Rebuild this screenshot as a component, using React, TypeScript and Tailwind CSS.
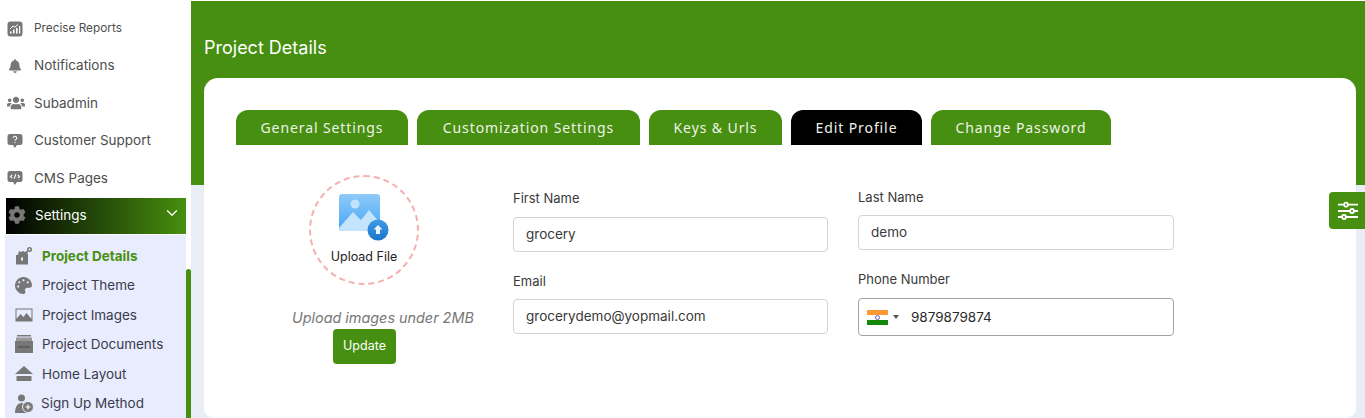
import React from "react";
import { FaBell, FaUsers, FaCog, FaPalette } from "react-icons/fa";
import { ChevronDown } from "lucide-react";

const gray = "#777777";

function ReportIcon() {
  return (
    <svg width="16" height="16" viewBox="0 0 16 16">
      <rect x="0.5" y="0.5" width="15" height="15" rx="3" fill={gray} />
      <path d="M3 12.500v-2h1.600v2zM6 12.500V8.500h1.600v4zM9 12.500V7h1.600v5.500zM12 12.500V5h1.200v7.500z" fill="#fff" />
      <path d="M3 8l3-3 2 1.200L11 3.500" stroke="#fff" strokeWidth="1" fill="none" />
    </svg>
  );
}
function BubbleIcon({ kind }: { kind: "q" | "code" }) {
  return (
    <svg width="16" height="16" viewBox="0 0 16 16">
      <path d="M3 1h10a2.500 2.500 0 0 1 2.500 2.500v6A2.500 2.500 0 0 1 13 12h-3l-2.200 3L6 12H3A2.500 2.500 0 0 1 .5 9.500v-6A2.500 2.500 0 0 1 3 1z" fill={gray} />
      {kind === "q" ? (
        <path d="M6.300 5a1.700 1.700 0 1 1 2.500 1.500c-.5.300-.8.600-.8 1.200M8 9v1" stroke="#fff" strokeWidth="1.100" fill="none" />
      ) : (
        <path d="M5.200 4.800L3.500 6.500l1.700 1.700M10.800 4.800l1.700 1.700-1.700 1.700M8.900 4.300L7.100 8.700" stroke="#fff" strokeWidth="1.100" fill="none" />
      )}
    </svg>
  );
}
function DetailsIcon() {
  return (
    <svg width="18" height="19" viewBox="0 0 18 19">
      <rect x="1" y="9" width="12" height="9.500" fill={gray} />
      <path d="M3 9l1-4 2 1 2-1 2 1 2-1 1 4z" fill={gray} />
      <rect x="6" y="11.500" width="2" height="3" fill="#e8ecfd" />
      <circle cx="14.500" cy="3.500" r="2.500" fill={gray} />
      <circle cx="14.500" cy="3.500" r="1" fill="#e8ecfd" />
      <path d="M10.500 7l2.200-2" stroke={gray} strokeWidth="1.500" />
    </svg>
  );
}
function ImagesIcon() {
  return (
    <svg width="18" height="14" viewBox="0 0 18 14">
      <rect x="0.500" y="0.500" width="17" height="13" fill={gray} />
      <rect x="1.500" y="1.500" width="15" height="9" fill="#e8ecfd" />
      <path d="M1.500 11l4-5 3 3 3-4 5 6v2h-15z" fill={gray} />
    </svg>
  );
}
function DocsIcon() {
  return (
    <svg width="18" height="18" viewBox="0 0 18 18">
      <path d="M2 0h14v1.500H2z" fill={gray} />
      <path d="M1 2.500h16V7H1z" fill="#999999" />
      <path d="M0 6h18v12H0z" fill={gray} />
      <path d="M3 11h12v2H3z" fill="#5f5f5f" />
    </svg>
  );
}
function HomeIcon() {
  return (
    <svg width="18" height="15" viewBox="0 0 18 15">
      <path d="M9 0l9 8H0z" fill={gray} />
      <path d="M1.500 10h15v5h-15z" fill={gray} />
    </svg>
  );
}
function SignupIcon() {
  return (
    <svg width="19" height="19" viewBox="0 0 19 19">
      <circle cx="6.500" cy="4" r="3.500" fill={gray} />
      <path d="M0 19c0-6 2.500-10 6.500-10S13 13 13 19z" fill={gray} />
      <circle cx="13" cy="13" r="5.500" fill={gray} stroke="#e8ecfd" strokeWidth="1" />
      <path d="M13 10.500v5M10.500 13h5" stroke="#fff" strokeWidth="1.200" />
    </svg>
  );
}
function UploadPicture() {
  return (
    <svg width="50" height="47" viewBox="0 0 50 47">
      <defs>
        <linearGradient id="sky" x1="0" y1="0" x2="0" y2="1">
          <stop offset="0" stopColor="#8fcbfa" />
          <stop offset="1" stopColor="#45a5f5" />
        </linearGradient>
        <linearGradient id="badge" x1="0" y1="0" x2="0" y2="1">
          <stop offset="0" stopColor="#3f9be6" />
          <stop offset="1" stopColor="#1976c9" />
        </linearGradient>
      </defs>
      <rect x="0" y="0" width="41" height="37" rx="3" fill="url(#sky)" />
      <circle cx="16" cy="10" r="4.500" fill="#c4e3fd" />
      <path d="M0 34l14-16 8 8 8-10 11 13v5a3 3 0 0 1-3 3H3a3 3 0 0 1-3-3z" fill="#c4e3fd" />
      <circle cx="39" cy="36" r="10.500" fill="url(#badge)" />
      <path d="M39 31l4.500 4.500H41v4.500h-4v-4.500h-2.500z" fill="#eaf5ff" />
    </svg>
  );
}
function India() {
  return (
    <svg width="21" height="15" viewBox="0 0 21 15">
      <rect width="21" height="5" fill="#ff9933" />
      <rect y="5" width="21" height="5" fill="#ffffff" />
      <rect y="10" width="21" height="5" fill="#138808" />
      <circle cx="10.500" cy="7.500" r="2" fill="none" stroke="#000088" strokeWidth="0.600" />
    </svg>
  );
}
function Sliders() {
  return (
    <svg width="20" height="20" viewBox="0 0 20 20" fill="none" stroke="#fff" strokeWidth="1.800">
      <path d="M0 3.700h6M10 3.700h10M0 10h12M16 10h4M0 16h4M8 16h12" />
      <circle cx="8" cy="3.700" r="2" />
      <circle cx="14" cy="10" r="2" />
      <circle cx="6" cy="16" r="2" />
    </svg>
  );
}

const topMenu = [
  { label: "Precise Reports", icon: <ReportIcon />, text: "text-[11.8px]", row: "h-[36px]" },
  { label: "Notifications", icon: <FaBell size={14} color={gray} className="ml-[1px]" />, text: "text-[13.5px]", row: "h-[37px]" },
  { label: "Subadmin", icon: <FaUsers size={18} color={gray} />, text: "text-[13.5px]", row: "h-[38px]" },
  { label: "Customer Support", icon: <BubbleIcon kind="q" />, text: "text-[13.5px]", row: "h-[37px]" },
  { label: "CMS Pages", icon: <BubbleIcon kind="code" />, text: "text-[13.5px]", row: "h-[38px]" },
];

const subMenu = [
  { label: "Project Details", icon: <DetailsIcon />, active: true },
  { label: "Project Theme", icon: <FaPalette size={17} color={gray} /> },
  { label: "Project Images", icon: <ImagesIcon /> },
  { label: "Project Documents", icon: <DocsIcon /> },
  { label: "Home Layout", icon: <HomeIcon /> },
  { label: "Sign Up Method", icon: <SignupIcon />, tight: true },
];

const tabs = [
  { label: "General Settings", w: "w-[172px]" },
  { label: "Customization Settings", w: "w-[223px]" },
  { label: "Keys & Urls", w: "w-[133px]" },
  { label: "Edit Profile", w: "w-[131px]", active: true },
  { label: "Change Password", w: "w-[180px]" },
];

function Field({ label, value, gap }: { label: string; value: string; gap: string }) {
  return (
    <div className="flex flex-col">
      <div className={`text-[13px] leading-[18px] text-[#3a3a3a] ${gap}`}>{label}</div>
      <div className="flex h-[35px] items-center rounded-[4px] border border-[#d2d2d2] bg-white pl-[12px] text-[13.5px] text-[#3a3a3a]">
        {value}
      </div>
    </div>
  );
}

export default function App() {
  return (
    <div className="relative flex h-[418px] w-[1365px] overflow-hidden bg-[#e8edf6] font-['Inter',sans-serif]">
      <aside className="relative flex h-full w-[191px] shrink-0 flex-col bg-white pt-[11px]">
        {topMenu.map((m) => (
          <div key={m.label} className={`flex shrink-0 items-center pl-[7px] ${m.row}`}>
            <span className="flex w-[27px] items-center">{m.icon}</span>
            <span className={`${m.text} text-[#4d4d4d]`}>{m.label}</span>
          </div>
        ))}
        <div className="ml-[6px] mr-[5px] mt-[1px] flex h-[36px] shrink-0 items-center bg-[linear-gradient(to_right,#000000,#478f10)] pb-[2px] pl-[2px] pr-[5px]">
          <FaCog size={18} color={gray} />
          <span className="ml-[9px] flex-1 text-[13.5px] text-white">Settings</span>
          <ChevronDown size={18} color="#ffffff" strokeWidth={1.700} className="-mt-[5px]" />
        </div>
        <div className="ml-[5px] mr-[5px] mt-[1px] flex flex-1 flex-col bg-[#e8ecfd] pl-[10px] pt-[6px]">
          {subMenu.map((s) => (
            <div key={s.label} className="flex h-[29.500px] shrink-0 items-center">
              <span className={`flex items-center ${s.tight ? "w-[26px]" : "w-[27px]"}`}>{s.icon}</span>
              <span className={s.active ? "text-[13.5px] font-bold text-[#478f10]" : "text-[13.5px] text-[#3b3b4d]"}>{s.label}</span>
            </div>
          ))}
        </div>
        <div className="absolute bottom-0 right-0 h-[149px] w-[5px] rounded-t-[3px] bg-[#478f10]" />
      </aside>

      <main className="flex min-w-0 flex-1 flex-col bg-[#e8edf6]">
        <div className="h-[1px] shrink-0 bg-white" />
        <div className="h-[184px] shrink-0 bg-[#478f10] pl-[13px] pt-[36px]">
          <h1 className="text-[18px] font-normal leading-[22px] text-white">Project Details</h1>
        </div>
        <section className="z-10 -mt-[107px] ml-[13px] mr-[9px] flex-1 rounded-b-[10px] rounded-t-[14px] bg-white pl-[32px] pt-[32px]">
          <div className="flex gap-[9px]">
            {tabs.map((t) => (
              <div
                key={t.label}
                className={`flex h-[35px] items-center justify-center rounded-t-[12px] pb-[1px] font-['Noto_Sans',sans-serif] text-[14px] font-normal tracking-[0.9px] text-[#eef3e8] ${t.w} ${t.active ? "bg-black" : "bg-[#478f10]"}`}
              >
                {t.label}
              </div>
            ))}
          </div>
          <div className="flex pt-[30px]">
            <div className="flex w-[277px] flex-col items-start">
              <div className="ml-[73px] flex h-[110px] w-[110px] flex-col items-center rounded-full border-2 border-dashed border-[#f5b0ae] pt-[17px]">
                <UploadPicture />
                <span className="mt-[7px] text-[12.5px] text-[#222222]">Upload File</span>
              </div>
              <div className="ml-[56px] mt-[22px] w-[181px] whitespace-nowrap text-center text-[14.4px] italic text-[#777777]">Upload images under 2MB</div>
              <button className="ml-[97px] mt-[0px] flex h-[35px] w-[63px] items-center justify-center rounded-[4px] bg-[#478f10] text-[12.5px] text-white">
                Update
              </button>
            </div>
            <div className="flex w-[315px] flex-col gap-[20px] pt-[14px]">
              <Field label="First Name" value="grocery" gap="mb-[10px]" />
              <Field label="Email" value="grocerydemo@yopmail.com" gap="mb-[9px]" />
            </div>
            <div className="ml-[30px] flex w-[316px] flex-col pt-[13px]">
              <Field label="Last Name" value="demo" gap="mb-[9px]" />
              <div className="mt-[20px] text-[13px] leading-[18px] text-[#3a3a3a]">Phone Number</div>
              <div className="mt-[10px] flex h-[38px] items-center rounded-[4px] border border-[#a3a3a3] bg-white pl-[8px] text-[13.5px] text-[#2a2a2a]">
                <India />
                <span className="ml-[5px] h-0 w-0 border-x-[3px] border-t-[4px] border-x-transparent border-t-[#555555]" />
                <span className="ml-[12px]">9879879874</span>
              </div>
            </div>
          </div>
        </section>
      </main>

      <div className="absolute left-[1329px] top-[192px] z-20 flex h-[37px] w-[36px] items-center justify-center rounded-l-[4px] bg-[#478f10] pl-[1px]">
        <Sliders />
      </div>
    </div>
  );
}
